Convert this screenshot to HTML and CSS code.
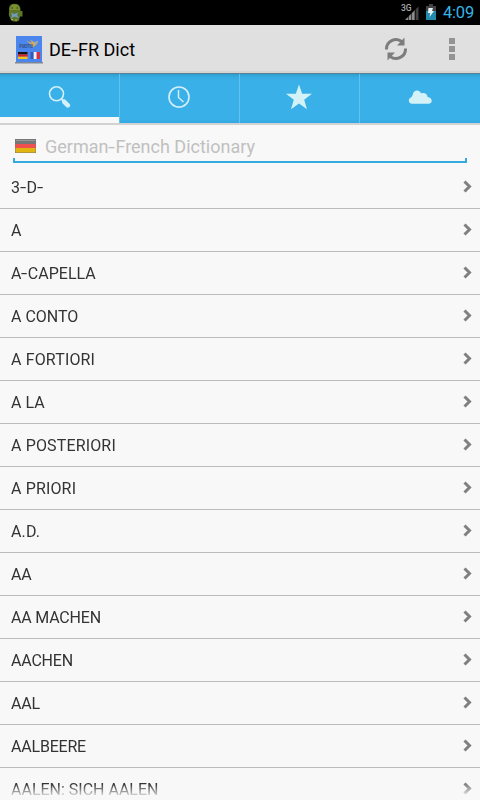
FILE: index.html
```
<!DOCTYPE html>
<html lang="de">
<head>
<meta charset="utf-8">
<title>DE-FR Dict</title>
<link rel="stylesheet" href="styles.css">
</head>
<body>
<div class="status">
  <svg class="droid" width="16" height="20" viewBox="0 0 16 20">
    <path d="M1 8.500V6Q1 .8 6.500 .8T12.500 6V8L14.500 8V13.500H12L11 17.500Q9 19 7 18.500Q3 19 2 15L.8 12Z" fill="#5f7424"/>
    <path d="M2 7Q2 1.500 6.500 1.500T12 7Z" fill="#7b9230"/>
    <path d="M3.500 5h1.500M8.500 5h1.500" stroke="#2d3b12"/>
    <path d="M2.500 9.500L6 11L10.500 9.500L9 12L11 15L6.500 13.500L3 15.500L4 12Z" fill="#6d9bc4"/>
    <path d="M3 16.500h2M7 17h2" stroke="#a4ad75"/>
  </svg>
  <div class="grow"></div>
  <svg class="signal" width="19" height="18" viewBox="0 0 19 18">
    <text x="0" y="7" class="net">3G</text>
    <path d="M4 16L14 6V16Z" fill="#8d8d8d"/>
    <path d="M14.500 5.500L17.500 2.500V16H14.500Z" fill="#424242"/>
    <path d="M7.500 10V16M10.500 8V16M14 4V16" stroke="#000" stroke-width=".6"/>
  </svg>
  <svg class="battery" width="10" height="16" viewBox="0 0 10 16">
    <path d="M0 2H3V0H7V2H10V16H0Z" fill="#444"/>
    <path d="M0 7H10V16H0Z" fill="#2389ad"/>
    <path d="M2.500 4H7L6 7H8L3.500 13L4.200 9H2Z" fill="#e8f3f7"/>
  </svg>
  <span class="time">4:09</span>
</div>
<header class="bar">
  <svg class="logo" width="28" height="28" viewBox="0 0 28 28">
    <path d="M1 0H27V26H1Z" fill="#4a86ee"/>
    <path d="M0 26H28V27.500H0Z" fill="#7c8797"/>
    <path d="M11 4.500L17 7L15 3.500L20 6.500L23.500 4.500L22 8L18 11.500L16 8.500Z" fill="#d6aa5c"/>
    <path d="M19 6L23 5L20 9Z" fill="#8faccc"/>
    <text x="4" y="11.500" class="mark" textLength="14" lengthAdjust="spacingAndGlyphs">IFMOTIO</text>
    <path d="M3 16h9.500v2.400H3Z" fill="#191310"/>
    <path d="M3 18.400h9.500v2.300H3Z" fill="#dc241f"/>
    <path d="M3 20.700h9.500V23H3Z" fill="#f4c51c"/>
    <path d="M15.500 16h3.200v7h-3.200Z" fill="#3858b8"/>
    <path d="M18.700 16h3v7h-3Z" fill="#f2f2f5"/>
    <path d="M21.700 16h3.300v7h-3.300Z" fill="#db303e"/>
  </svg>
  <h1>DE<span class="dash">-</span>FR Dict</h1>
  <svg class="refresh" width="24" height="24" viewBox="0 0 24 24">
    <g fill="none" stroke="#7d7d7d" stroke-width="3">
      <path d="M2.500 12.500A9.500 9.500 0 0 1 18 4.700"/>
      <path d="M21.500 11.500A9.500 9.500 0 0 1 6 19.300"/>
    </g>
    <path d="M20.500 .5V8.500H13ZM3.500 23.500V15.500H11Z" fill="#7d7d7d"/>
  </svg>
  <svg class="more" width="6" height="22" viewBox="0 0 6 22"><path d="M0 0h6v6H0ZM0 8h6v6H0ZM0 16h6v6H0Z" fill="#949494"/></svg>
</header>
<nav class="tabs">
  <div class="tab active"><svg width="24" height="24" viewBox="0 0 24 24">
    <circle cx="9.500" cy="8.800" r="7" fill="none" stroke="#d5f0fa" stroke-width="1.600"/>
    <path d="M14.300 13.800L16.500 16" stroke="#d5f0fa" stroke-width="2"/>
    <path d="M17.300 16.800L20.800 20.300" stroke="#d5f0fa" stroke-width="4.600" stroke-linecap="round"/>
  </svg></div>
  <div class="tab"><svg width="24" height="24" viewBox="0 0 24 24">
    <circle cx="12" cy="12" r="10" fill="none" stroke="#d5f0fa" stroke-width="1.600"/>
    <path d="M11.500 5V12.500L16.500 17" fill="none" stroke="#d5f0fa" stroke-width="1.500"/>
  </svg></div>
  <div class="tab"><svg width="26" height="26" viewBox="0 0 26 26">
    <path d="M13 .5L16.200 9.800H26L18.200 15.700L21 25.300L13 19.600L5 25.300L7.800 15.700L0 9.800H9.800Z" fill="#d3f2f8"/>
  </svg></div>
  <div class="tab"><svg width="24" height="24" viewBox="0 0 24 24">
    <path d="M4 18.800C.8 18.800 -.5 14.500 2.500 12.800Q4.300 11.700 4.800 9.500C5.500 4.300 11.500 4.200 13.200 8.400C16 7.200 19.300 8.800 19.600 12C24.800 12.200 25 18.800 20.500 18.800Z" fill="#d3f2f8"/>
  </svg></div>
</nav>
<main>
  <div class="search">
    <svg width="21" height="15" viewBox="0 0 21 15">
      <path d="M0 0h21v5H0Z" fill="#777"/><path d="M0 5h21v4H0Z" fill="#f25050"/><path d="M0 9h21v5H0Z" fill="#e2b410"/>
      <path d="M0 13.500h21M.5 0V14M20.500 0V14" stroke="#777" stroke-opacity=".45"/>
      <path d="M1 1.500h19" stroke="#999"/>
    </svg>
    <span class="hint">German<span class="dash">-</span>French Dictionary</span>
  </div>
  <ul class="list">
    <li><span>3<span class="dash">-</span>D<span class="dash">-</span></span><svg class="chev" viewBox="0 0 9 13"><path d="M1.500 1.500L6.500 6.500L1.500 11.500"/></svg></li>
    <li><span>A</span><svg class="chev" viewBox="0 0 9 13"><path d="M1.500 1.500L6.500 6.500L1.500 11.500"/></svg></li>
    <li><span>A<span class="dash">-</span>CAPELLA</span><svg class="chev" viewBox="0 0 9 13"><path d="M1.500 1.500L6.500 6.500L1.500 11.500"/></svg></li>
    <li><span>A CONTO</span><svg class="chev" viewBox="0 0 9 13"><path d="M1.500 1.500L6.500 6.500L1.500 11.500"/></svg></li>
    <li><span class="loose">A FORTIORI</span><svg class="chev" viewBox="0 0 9 13"><path d="M1.500 1.500L6.500 6.500L1.500 11.500"/></svg></li>
    <li><span>A LA</span><svg class="chev" viewBox="0 0 9 13"><path d="M1.500 1.500L6.500 6.500L1.500 11.500"/></svg></li>
    <li><span class="loose">A POSTERIORI</span><svg class="chev" viewBox="0 0 9 13"><path d="M1.500 1.500L6.500 6.500L1.500 11.500"/></svg></li>
    <li><span class="loose">A PRIORI</span><svg class="chev" viewBox="0 0 9 13"><path d="M1.500 1.500L6.500 6.500L1.500 11.500"/></svg></li>
    <li><span class="loose">A.D.</span><svg class="chev" viewBox="0 0 9 13"><path d="M1.500 1.500L6.500 6.500L1.500 11.500"/></svg></li>
    <li><span class="tight">AA</span><svg class="chev" viewBox="0 0 9 13"><path d="M1.500 1.500L6.500 6.500L1.500 11.500"/></svg></li>
    <li><span class="tight">AA MACHEN</span><svg class="chev" viewBox="0 0 9 13"><path d="M1.500 1.500L6.500 6.500L1.500 11.500"/></svg></li>
    <li><span class="tight">AACHEN</span><svg class="chev" viewBox="0 0 9 13"><path d="M1.500 1.500L6.500 6.500L1.500 11.500"/></svg></li>
    <li><span class="tight">AAL</span><svg class="chev" viewBox="0 0 9 13"><path d="M1.500 1.500L6.500 6.500L1.500 11.500"/></svg></li>
    <li><span class="tight">AALBEERE</span><svg class="chev" viewBox="0 0 9 13"><path d="M1.500 1.500L6.500 6.500L1.500 11.500"/></svg></li>
    <li><span>AALEN: SICH AALEN</span><svg class="chev" viewBox="0 0 9 13"><path d="M1.500 1.500L6.500 6.500L1.500 11.500"/></svg></li>
  </ul>
</main>
</body>
</html>
```
FILE: styles.css
```
* { box-sizing: border-box; }
body {
  margin: 0;
  width: 480px;
  height: 800px;
  overflow: hidden;
  display: flex;
  flex-direction: column;
  background: #f8f8f8;
  font-family: Roboto, "Liberation Sans", sans-serif;
}
svg { display: block; flex: none; }
.dash {
  display: inline-block;
  transform: scaleX(1.4);
  margin: 0 1px;
}
.status {
  flex: none;
  height: 25px;
  display: flex;
  align-items: center;
  padding: 0 6px 0 8px;
  background: #000;
}
.droid { margin-top: 1px; }
.grow { flex: 1; }
.signal { margin-right: 6px; margin-top: 1px; }
.net { font-size: 8.5px; font-weight: 500; fill: #aaa; }
.battery { margin-right: 7px; margin-top: -1px; }
.time { width: 31px; font-size: 16.5px; letter-spacing: -0.2px; line-height: 25px; color: #33b5e5; white-space: nowrap; }
.bar {
  flex: none;
  height: 49px;
  display: flex;
  align-items: center;
  padding: 0 25px 0 14.5px;
  background: #e0e0e0;
  border-bottom: 1px solid #5b8194;
  box-shadow: inset 0 -2px #d8d4d2;
}
.logo { margin-top: 1px; }
.mark { font-size: 5px; font-weight: 700; fill: #35517d; }
h1 {
  flex: 1;
  margin: 1px 0 0 6.5px;
  font-size: 18px;
  line-height: 24px;
  font-weight: 400;
  color: #000;
}
.refresh { margin-right: 41px; }
.more { margin-top: 0; }
.tabs {
  flex: none;
  height: 51px;
  display: grid;
  grid-template-columns: repeat(4, 1fr);
  background: linear-gradient(#2c9dd0, #37abe1 3px, #39b0e8 7px, #39b0e8 45px, #31a8e0 49px);
  border-bottom: 2px solid #d2d2d2;
}
.tab {
  display: flex;
  justify-content: center;
  padding: 11px 1px 0 0;
  border-right: 1px solid #63c2ef;
}
.tab:last-child { border-right: 0; padding-right: 0; }
.tab:nth-child(3) { padding-top: 10px; }
.tab.active { box-shadow: inset 0 -6px #f8f8f8; }
main {
  flex: 1;
  min-height: 0;
  display: flex;
  flex-direction: column;
}
.search {
  position: relative;
  flex: none;
  height: 38px;
  margin: 0 13px;
  padding: 10px 0 0 2px;
  display: flex;
  gap: 9px;
  border-bottom: 2px solid #33abe0;
}
.search svg { margin-top: 4px; }
.search::after {
  content: "";
  position: absolute;
  left: 0;
  right: 0;
  bottom: 0;
  height: 3px;
  border: solid #33abe0;
  border-width: 0 2px;
}
.hint { font-size: 18px; line-height: 24px; color: #c0c0c0; }
.list {
  flex: none;
  height: 634px;
  margin: 3px 0 0;
  padding: 0;
  list-style: none;
  overflow: hidden;
  -webkit-mask-image: linear-gradient(#000 618px, transparent 632px);
  mask-image: linear-gradient(#000 618px, transparent 632px);
}
.list li {
  height: 43px;
  display: flex;
  justify-content: space-between;
  align-items: center;
  padding: 2px 8px 0 11px;
  border-bottom: 1px solid #bcbcbc;
  font-size: 16px;
  line-height: 20px;
  color: #333;
}
.loose { letter-spacing: 0.15px; }
.tight { letter-spacing: -0.2px; }
.chev { width: 9px; height: 13px; margin-top: -3px; }
.chev path { fill: none; stroke: #808080; stroke-width: 3; }
```
